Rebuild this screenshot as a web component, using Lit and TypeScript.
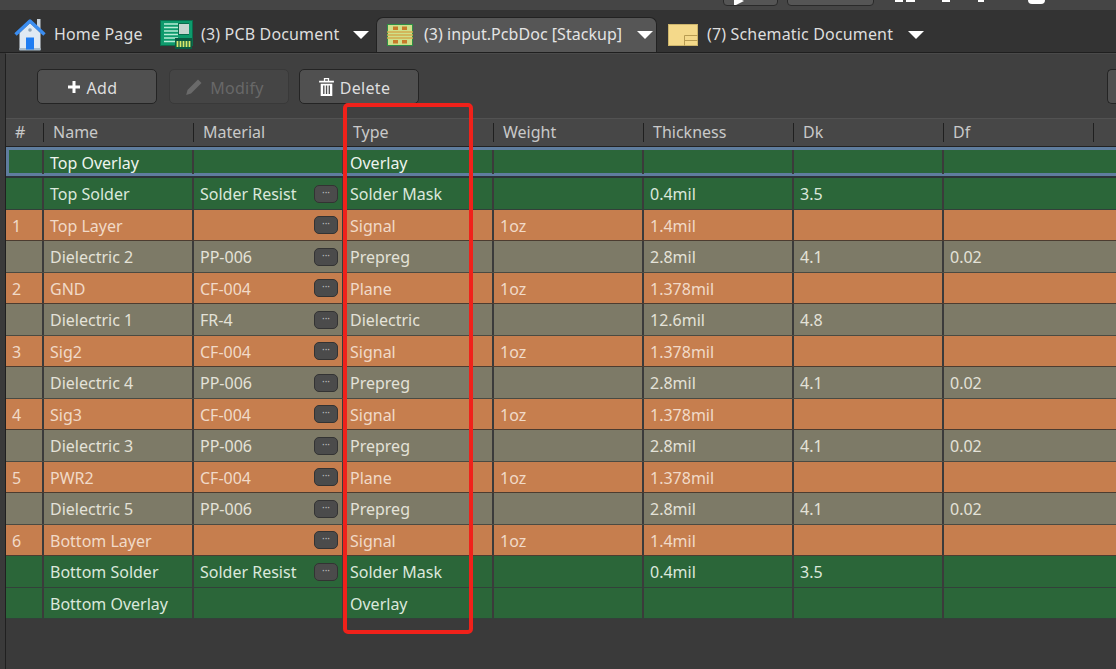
import { LitElement, html, css, svg } from "lit";
import { customElement } from "lit/decorators.js";

type Row = { n: string; name: string; mat: string; btn: boolean; type: string; w: string; t: string; dk: string; df: string; k: string };
const R = (k: string, n: string, name: string, mat: string, btn: boolean, type: string, w: string, t: string, dk: string, df: string): Row => ({ k, n, name, mat, btn, type, w, t, dk, df });

const rows: Row[] = [
  R("g", "", "Top Overlay", "", false, "Overlay", "", "", "", ""),
  R("g", "", "Top Solder", "Solder Resist", true, "Solder Mask", "", "0.4mil", "3.5", ""),
  R("o", "1", "Top Layer", "", true, "Signal", "1oz", "1.4mil", "", ""),
  R("d", "", "Dielectric 2", "PP-006", true, "Prepreg", "", "2.8mil", "4.1", "0.02"),
  R("o", "2", "GND", "CF-004", true, "Plane", "1oz", "1.378mil", "", ""),
  R("d", "", "Dielectric 1", "FR-4", true, "Dielectric", "", "12.6mil", "4.8", ""),
  R("o", "3", "Sig2", "CF-004", true, "Signal", "1oz", "1.378mil", "", ""),
  R("d", "", "Dielectric 4", "PP-006", true, "Prepreg", "", "2.8mil", "4.1", "0.02"),
  R("o", "4", "Sig3", "CF-004", true, "Signal", "1oz", "1.378mil", "", ""),
  R("d", "", "Dielectric 3", "PP-006", true, "Prepreg", "", "2.8mil", "4.1", "0.02"),
  R("o", "5", "PWR2", "CF-004", true, "Plane", "1oz", "1.378mil", "", ""),
  R("d", "", "Dielectric 5", "PP-006", true, "Prepreg", "", "2.8mil", "4.1", "0.02"),
  R("o", "6", "Bottom Layer", "", true, "Signal", "1oz", "1.4mil", "", ""),
  R("g", "", "Bottom Solder", "Solder Resist", true, "Solder Mask", "", "0.4mil", "3.5", ""),
  R("g", "", "Bottom Overlay", "", false, "Overlay", "", "", "", ""),
];
const heads = ["#", "Name", "Material", "Type", "Weight", "Thickness", "Dk", "Df"];

const homeIcon = svg`<svg width="32" height="33" viewBox="0 0 32 33">
  <rect x="23" y="1" width="3.5" height="10" fill="#c9d3dc"/>
  <path d="M5.5 15 16 5l10.5 10v17h-21z" fill="#dfe9f3"/>
  <path d="M5.5 30h21v2.5h-21z" fill="#a9bccb"/>
  <path d="M1.5 16.5 16 3l14.500 13.500" fill="none" stroke="#3b8df0" stroke-width="3.400" stroke-linejoin="round"/>
  <rect x="12" y="19.500" width="8" height="12" fill="#1f7df2"/>
  <circle cx="16" cy="12" r="1.800" fill="#8fa4b6"/>
</svg>`;

const pcbIcon = svg`<svg width="33" height="30" viewBox="0 0 33 30">
  <rect x="0.500" y="0.500" width="32" height="25" fill="#0d9a6c" stroke="#0a6c4c"/>
  <path d="M4 4h14M4 7.500h14M4 11h14M4 14.500h14M4 18h14M4 21.500h11" stroke="#b6ecd5" stroke-width="1.300"/>
  <rect x="18" y="3" width="11" height="12" fill="#0a6c4c"/>
  <rect x="19" y="4" width="10" height="10" fill="#c6d6d0"/>
  <rect x="15" y="18" width="17" height="11" fill="#0a5b41"/>
  <path d="M17.500 21v6M20.500 21v6M23.500 21v6M26.500 21v6M29.500 21v6" stroke="#d8e96a" stroke-width="1.800"/>
</svg>`;

const stackIcon = svg`<svg width="26" height="22" viewBox="0 0 26 22">
  <rect x="0.500" y="0.500" width="25" height="21" fill="#cfe08a" stroke="#2e8f46"/>
  <rect x="6" y="2.500" width="5" height="3.500" fill="#c77a2a"/>
  <rect x="15" y="2.500" width="5" height="3.500" fill="#c77a2a"/>
  <rect x="6" y="16" width="5" height="3.500" fill="#c77a2a"/>
  <rect x="15" y="16" width="5" height="3.500" fill="#c77a2a"/>
  <path d="M0 8h26M0 11h26M0 14h26" stroke="#d4a94e" stroke-width="1.500"/>
</svg>`;

const schIcon = svg`<svg width="30" height="22" viewBox="0 0 30 22">
  <rect x="0.500" y="0.500" width="29" height="21" fill="#f4d98a" stroke="#cdb56c"/>
  <path d="M16.500 21.500V11.500H29.500M16.500 16.500H29.500" fill="none" stroke="#b89c52" stroke-width="1"/>
</svg>`;

const pencil = svg`<svg width="18" height="18" viewBox="0 0 18 18"><path d="M13 1.500 16.500 5 6 15.500 1.200 17 2.500 12z" fill="#6a6a6a"/></svg>`;
const trash = svg`<svg width="15" height="19" viewBox="0 0 14 18"><path d="M0 3.500h14v1.600H0zM4.500 3.500V1h5v2.500H8.300V2.200H5.700v1.300z" fill="#fff"/><path fill-rule="evenodd" d="M1.500 6.500h11V18h-11zM3.800 8v8h1.300V8zM6.400 8v8h1.300V8zM9 8v8h1.300V8z" fill="#fff"/></svg>`;
const plus = svg`<svg width="12" height="12" viewBox="0 0 12 12"><path d="M4.500 0h3v4.500H12v3H7.500V12h-3V7.500H0v-3h4.500z" fill="#fff"/></svg>`;

@customElement("app-root")
export class AppRoot extends LitElement {
  static styles = css`
    :host { display: block; position: relative; width: 1116px; height: 669px; overflow: hidden; background: #3a3a3a;
      font-family: "Noto Sans", "Open Sans", sans-serif; font-size: 16px; color: #dcdcdc; }
    .page { display: flex; flex-direction: column; height: 669px; }
    .strip { height: 10px; flex: none; background: #454545; display: flex; align-items: flex-end; padding-left: 723px; gap: 9px; overflow: hidden; }
    .mini { height: 15px; margin-bottom: 4px; box-sizing: border-box; background: #555; border: 1.500px solid #2a2a2a; border-radius: 4px; flex: none; position: relative; overflow: hidden; }
    .m1 { width: 55px; }
    .m2 { width: 87px; }
    .tri { position: absolute; left: 10px; bottom: -1px; width: 0; height: 0; border-left: 10px solid #fff; border-top: 5px solid transparent; border-bottom: 5px solid transparent; }
    .scraps { margin-left: 12px; height: 10px; position: relative; width: 160px; flex: none; }
    .scrap { position: absolute; top: 0; height: 2px; background: #fff; }
    .s1 { left: 0; width: 8px; }
    .s2 { left: 11px; width: 9px; }
    .s3 { left: 47px; width: 8px; }
    .s4 { left: 83px; width: 6px; }
    .s5 { left: 133px; width: 17px; height: 4px; border-radius: 0 0 9px 9px; }
    .tabs { height: 43px; flex: none; box-sizing: border-box; background: #333; border-bottom: 1px solid #1f1f1f; display: flex; align-items: flex-end; padding-left: 14px; }
    .tab { display: flex; align-items: center; height: 35px; box-sizing: border-box; flex: none; color: #dedede; white-space: nowrap; letter-spacing: 0.160px; }
    .tab .t { position: relative; top: -1px; }
    .tab.home { width: 146px; gap: 8px; }
    .tab.pcb { width: 216px; gap: 8px; }
    .tab.active { width: 281px; background: #565656; border: 1.500px solid #222; border-bottom: none; border-radius: 7px 7px 0 0; padding-left: 10px; gap: 11px; color: #e4e4e4; letter-spacing: 0.040px; }
    .tab.sch { margin-left: 11px; gap: 9px; }
    .arrow { width: 0; height: 0; border-left: 8px solid transparent; border-right: 8px solid transparent; border-top: 8px solid #fff; flex: none; }
    .pcb .arrow { margin-left: 6px; }
    .active .arrow { margin-left: 4px; }
    .sch .arrow { margin-left: 6px; }
    .body { flex: 1; margin-left: 5px; border-left: 1px solid #202020; display: flex; flex-direction: column; background: #3a3a3a; min-height: 0; border-top: 1px solid #4a4a4a; }
    .toolbar { height: 64px; flex: none; box-sizing: border-box; background: #404040; display: flex; align-items: center; gap: 12px; padding: 1px 0 0 31px; position: relative; }
    .btn { width: 120px; height: 35px; box-sizing: border-box; background: #505050; border: 1.500px solid #242424; border-radius: 5px; display: flex; align-items: center; justify-content: center; gap: 7px; color: #dedede; flex: none; padding-right: 9px; letter-spacing: 0.300px; }
    .btn span { position: relative; top: 1px; }
    .btn.off { background: #454545; border-color: #393939; color: #686868; }
    .btn.del { margin-left: -2px; gap: 6px; }
    .stub { margin-left: auto; width: 9px; height: 35px; box-sizing: border-box; background: #505050; border: 1.500px solid #242424; border-right: none; border-radius: 5px 0 0 5px; flex: none; }
    .grid-head, .row { display: grid; grid-template-columns: 38px repeat(7, 150px) 1fr; }
    .grid-head { height: 28.500px; flex: none; background: #474747; border-top: 1px solid #525252; border-bottom: 1.500px solid #222; box-sizing: border-box; }
    .hc { display: flex; align-items: center; padding-left: 9px; color: #c9c9c9; position: relative; }
    .hc::after { content: ""; position: absolute; right: 0; top: 4px; bottom: 4px; width: 1px; background: #1f1f1f; }
    .row { height: 31.500px; box-sizing: border-box; border-bottom: 1px solid #33403a; }
    .row.g { background: #2b6639; color: #dbe8dc; }
    .row.o { background: #c67e4e; color: #f1dac8; border-bottom-color: #4c3c30; }
    .row.d { background: #7d7a67; color: #e4e2d8; border-bottom-color: #4a4a42; }
    .row.sel { box-shadow: inset 3px 0 0 #5f7d9e, inset 0 3px 0 #5f7d9e, inset 0 -3px 0 #5f7d9e; border-bottom: 2px solid #2c3438; color: #eef4ee; }
    .row.sel .c { margin-block: 3px; padding-top: 2px; }
    .c { display: flex; align-items: center; justify-content: space-between; padding: 1.500px 4px 0 6px; border-right: 2px solid #3b3b3b; min-width: 0; white-space: nowrap; }
    .c:nth-last-child(-n + 2) { border-right: none; }
    .more { width: 24px; height: 18px; margin-top: -1px; box-sizing: border-box; background: #4b4b4b; border: 1px solid #333; border-radius: 5px; color: #bbb; font-size: 10px; line-height: 13px; text-align: center; flex: none; }
    .box { position: absolute; left: 343px; top: 103px; width: 130px; height: 531px; box-sizing: border-box; border: 4.500px solid #f0211a; border-radius: 5px; pointer-events: none; }
  `;

  render() {
    return html`
      <div class="page">
        <div class="strip">
          <div class="mini m1"><span class="tri"></span></div>
          <div class="mini m2"></div>
          <div class="scraps">
            <span class="scrap s1"></span>
            <span class="scrap s2"></span>
            <span class="scrap s3"></span>
            <span class="scrap s4"></span>
            <span class="scrap s5"></span>
          </div>
        </div>
        <div class="tabs">
          <div class="tab home">${homeIcon}<span class="t">Home Page</span></div>
          <div class="tab pcb">${pcbIcon}<span class="t">(3) PCB Document</span><span class="arrow"></span></div>
          <div class="tab active">${stackIcon}<span class="t">(3) input.PcbDoc [Stackup]</span><span class="arrow"></span></div>
          <div class="tab sch">${schIcon}<span class="t">(7) Schematic Document</span><span class="arrow"></span></div>
        </div>
        <div class="body">
          <div class="toolbar">
            <div class="btn">${plus}<span>Add</span></div>
            <div class="btn off">${pencil}<span>Modify</span></div>
            <div class="btn del">${trash}<span>Delete</span></div>
            <div class="stub"></div>
          </div>
          <div class="grid-head">${heads.map((h) => html`<div class="hc">${h}</div>`)}<div></div></div>
          ${rows.map((r, i) => html`
            <div class="row ${r.k} ${i === 0 ? "sel" : ""}">
              <div class="c">${r.n}</div>
              <div class="c">${r.name}</div>
              <div class="c"><span>${r.mat}</span>${r.btn ? html`<span class="more">···</span>` : ""}</div>
              <div class="c">${r.type}</div>
              <div class="c">${r.w}</div>
              <div class="c">${r.t}</div>
              <div class="c">${r.dk}</div>
              <div class="c">${r.df}</div>
              <div class="c"></div>
            </div>`)}
        </div>
      </div>
      <div class="box"></div>
    `;
  }
}
